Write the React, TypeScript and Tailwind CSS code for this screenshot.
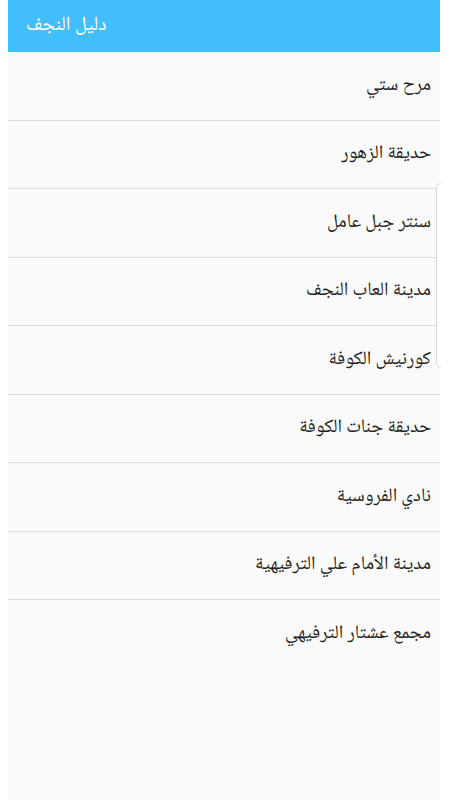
import React from "react";

const items = [
  "مرح ستي",
  "حديقة الزهور",
  "سنتر جبل عامل",
  "مدينة العاب النجف",
  "كورنيش الكوفة",
  "حديقة جنات الكوفة",
  "نادي الفروسية",
  "مدينة الأمام علي الترفيهية",
  "مجمع عشتار الترفيهي",
];

const font = { fontFamily: '"Noto Naskh Arabic", "Noto Sans Arabic", "DejaVu Sans", sans-serif' };

export default function App() {
  return (
    <div className="w-[450px] h-[800px] bg-white flex overflow-hidden" style={font}>
      <div className="w-[8px] shrink-0" />
      <div className="relative w-[432px] flex flex-col bg-[#fafafa]">
        <div className="h-[52px] shrink-0 bg-[#42befa] flex items-center pl-[18px]">
          <span dir="rtl" className="text-white text-[20px] font-light">دليل النجف</span>
        </div>
        <div className="flex flex-col">
          {items.map((t, i) => (
            <div
              key={i}
              dir="rtl"
              className={`h-[68.5px] flex items-center pr-[9px] text-[#212121] text-[19px] font-light ${
                i < items.length - 1 ? "border-b border-[#dcdcdc]" : ""
              }`}
            >
              {t}
            </div>
          ))}
        </div>
        <div className="absolute left-[428px] top-[183px] w-[5px] h-[185px] bg-white border border-r-0 border-[#d6d6d6] rounded-l-[5px]" />
      </div>
      <div className="flex-1" />
    </div>
  );
}
